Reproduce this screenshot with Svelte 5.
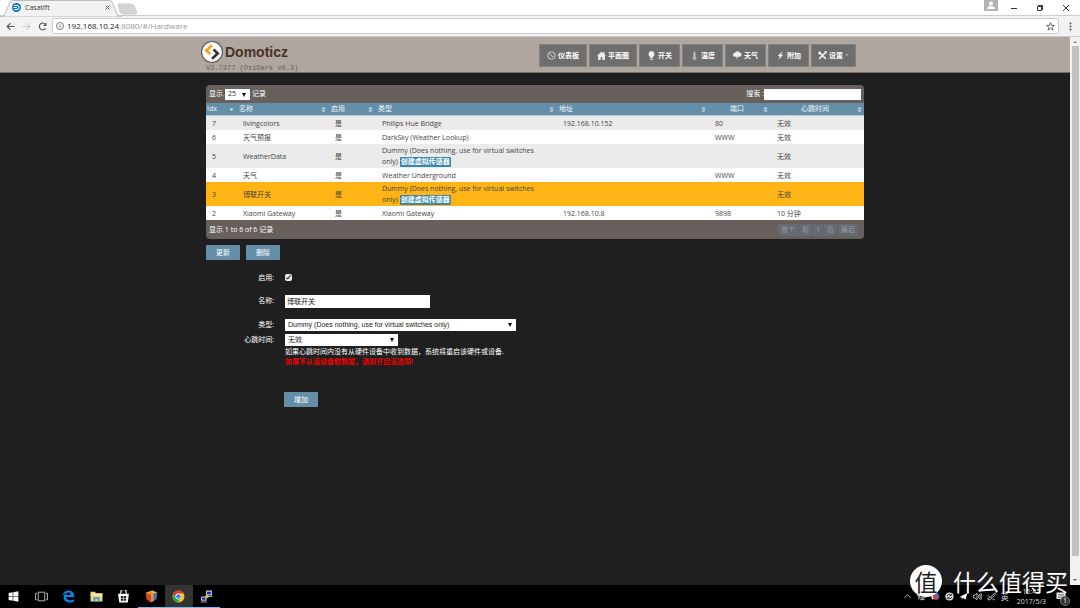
<script>
    const nav = [
        { icon: 'gauge', text: '仪表板', wide: true },
        { icon: 'home', text: '平面图', wide: true },
        { icon: 'bulb', text: '开关' },
        { icon: 'temp', text: '温度' },
        { icon: 'cloud', text: '天气' },
        { icon: 'bolt', text: '附加' },
        { icon: 'tools', text: '设置', caret: true }
    ];

    const columns = [
        { text: 'Idx', width: 30, sorted: true },
        { text: '名称', width: 92 },
        { text: '启用', width: 47 },
        { text: '类型', width: 181 },
        { text: '地址', width: 152 },
        { text: '端口', width: 62, center: true },
        { text: '心跳时间', width: 94, center: true }
    ];

    const dummy = 'Dummy (Does nothing, use for virtual switches only)';

    const devices = [
        { id: 7, name: 'livingcolors', type: 'Philips Hue Bridge', address: '192.168.10.152', port: '80', timeout: '无效' },
        { id: 6, name: '天气预报', type: 'DarkSky (Weather Lookup)', address: '', port: 'WWW', timeout: '无效' },
        { id: 5, name: 'WeatherData', type: dummy, virtual: true, address: '', port: '', timeout: '无效' },
        { id: 4, name: '天气', type: 'Weather Underground', address: '', port: 'WWW', timeout: '无效' },
        { id: 3, name: '博联开关', type: dummy, virtual: true, address: '', port: '', timeout: '无效' },
        { id: 2, name: 'Xiaomi Gateway', type: 'Xiaomi Gateway', address: '192.168.10.8', port: '9898', timeout: '10 分钟' }
    ];

    const pages = ['首个', '前', '1', '后', '最后'];
    const apps = ['windows', 'tasks', 'edge', 'folder', 'store', 'cube', 'chrome', 'putty'];
    const tray = ['up', 'network', 'guard', 'sync', 'plane', 'volume', 'pen'];

    let selected = $state(3);
    let enabled = $state(true);
    let name = $state('博联开关');
    let search = $state('');
</script>

{#snippet navIcon(icon)}
    <svg class="nav-icon" viewBox="0 0 16 16" aria-hidden="true">
        {#if icon === 'gauge'}
            <circle cx="8" cy="8" r="6.6" fill="none" stroke="#ddd" stroke-width="1.6" />
            <path d="M5 4.5 8.5 9.5M8.5 9.5h3" stroke="#ddd" stroke-width="1.6" fill="none" />
        {:else if icon === 'home'}
            <path d="M0 9 8 1l3 3V2h2.500v4.500L16 9h-2v7H9.500v-5h-3v5H2V9z" fill="#eee" />
        {:else if icon === 'bulb'}
            <path d="M8 0a5.500 5.500 0 0 0-3 10l1 2.500h4L11 10a5.500 5.500 0 0 0-3-10zM6 13.500h4V16H6z" fill="#eee" />
        {:else if icon === 'temp'}
            <path d="M6 1h4v9a3.500 3.500 0 1 1-4 0z" fill="#aaa" />
            <path d="M8 5v8" stroke="#ddd" stroke-width="1.500" />
        {:else if icon === 'cloud'}
            <path d="M3.500 10a3.500 3.500 0 0 1 0-7A5 5 0 0 1 12 2.500a4 4 0 0 1 1 7.500H9l-3 5 .5-5z" fill="#eee" />
        {:else if icon === 'bolt'}
            <path d="M12 0 3 9h4l-3 7 9-9.500H9z" fill="#eee" />
        {:else}
            <path d="M2 2l12 12M14 2 2 14" stroke="#eee" stroke-width="2.600" />
            <path d="M0 4a4 4 0 0 0 5 2L6 4 3 0zM11 1l4 4 1-3-2-2z" fill="#eee" />
        {/if}
    </svg>
{/snippet}

{#snippet appIcon(app)}
    <svg class="app-icon" viewBox="0 0 24 24" aria-hidden="true">
        {#if app === 'windows'}
            <path d="M3 5.500 10.500 4v7.500H3zM11.500 4 21 2.500v9h-9.500zM3 12.500h7.500V20L3 18.500zM11.500 12.500H21v9L11.500 20z" fill="#fff" />
        {:else if app === 'tasks'}
            <path d="M6 4h12v16H6zM4 6H1v12h3M20 6h3v12h-3" fill="none" stroke="#ccc" stroke-width="1.600" />
        {:else if app === 'edge'}
            <path d="M1 11C2 4 7 1 12 1c7 0 11 5 11 12H8c0 4 3 6 7 6 3 0 5-.7 7-2v4c-2 1.300-5 2-8 2-7 0-11-4-11-10 0-3 2-6 5-8-3 1-5 3-7 6zm7-2h8c0-3-1.500-4.500-4-4.500S8.500 6 8 9z" fill="#0a84e0" />
        {:else if app === 'folder'}
            <path d="M1 3h8l2 3h12v15H1z" fill="#f6d77c" />
            <path d="M1 7h22v3H1z" fill="#ffe9a6" />
            <path d="M6 21v-8h12v8h-4v-4h-4v4z" fill="#4aa8dc" />
        {:else if app === 'store'}
            <path d="M7 7V4a5 5 0 0 1 10 0v3" fill="none" stroke="#fff" stroke-width="2" />
            <path d="M2 7h20l-2 16H4z" fill="#fff" />
            <path d="M7 11h4.500v4H7zM12.500 11H17v4h-4.500zM7 16h4.500v4H7zM12.500 16H17v4h-4.500z" fill="#222" />
        {:else if app === 'cube'}
            <path d="M1 5 14 1l9 4-12 4z" fill="#e8bb4c" />
            <path d="M1 5l10 4v14L3 17z" fill="#d94b27" />
            <path d="M11 9l12-4-2 12-10 6z" fill="#2f7dbd" />
            <path d="M5 4l5-1.500L17 7l-6 2zM11 9l5-1.600V20l-5 3z" fill="#ef8c36" />
        {:else if app === 'chrome'}
            <circle cx="12" cy="12" r="11" fill="#fbc116" />
            <path d="M2.500 6.500A11 11 0 0 1 21.500 6.500H12a5.500 5.500 0 0 0-5 8z" fill="#e33b2e" />
            <path d="M2.500 6.500A11 11 0 0 0 11 23l5.500-8.500c-3 4-8 3-9.500 0z" fill="#2ba24c" />
            <circle cx="12" cy="12" r="5.500" fill="#fff" />
            <circle cx="12" cy="12" r="4.300" fill="#4285f4" />
        {:else}
            <path d="M11 1h11v9H11zM2 12h10v8H2z" fill="#c5c9d8" />
            <path d="M13 3h7v5h-7zM4 14h6v4H4z" fill="#1824b8" />
            <path d="M13 11h10v2H13zM1 21h12v2H1z" fill="#9a9da8" />
            <path d="M15 8 8 12l5 1-5 5 10-6-5-1z" fill="#f5e829" />
        {/if}
    </svg>
{/snippet}

{#snippet trayIcon(icon)}
    <svg class="tray-icon" viewBox="0 0 20 20" fill="none" stroke="#ddd" stroke-width="1.800" aria-hidden="true">
        {#if icon === 'up'}
            <path d="M3 13l7-7 7 7" />
        {:else if icon === 'network'}
            <path d="M6 4h12v9H6zM12 13v4M7 17h10M1 3v5h3v9" />
        {:else if icon === 'guard'}
            <path d="M10 1A9 9 0 0 0 4 17l6-7z" fill="#e7eefb" stroke="none" />
            <path d="M10 1a9 9 0 0 1 5 16l-5-7z" fill="#3277d8" stroke="none" />
            <path d="M3 8l8-3 4 12H7z" fill="#e23b2d" stroke="none" />
        {:else if icon === 'sync'}
            <circle cx="10" cy="10" r="9" fill="#ddd" stroke="none" />
            <path d="M5 9a5 5 0 0 1 9-2M15 11a5 5 0 0 1-9 2M14 4v4h-4M6 16v-4h4" stroke="#222" />
        {:else if icon === 'plane'}
            <path d="M1 11 19 2l-5 15-5-4-3 4v-5z" fill="#fff" stroke="none" />
        {:else if icon === 'volume'}
            <path d="M1 7h3l5-4v14l-5-4H1zM12 7q2 3 0 6M14 4q5 6 0 12M17 2q6 8 0 16" />
        {:else}
            <path d="M8 12 17 2l2 3-8 9zM11 13q-4 7-9 4 0-5 5-5M1 11q2-4 5-1M12 17h5" />
        {/if}
    </svg>
{/snippet}

<div class="desktop">
    <header class="browser">
        <div class="tab-strip">
            <div class="tab">
                <svg class="tab-shape" viewBox="0 0 138 17" aria-hidden="true">
                    <path d="M0 17 4 16 10 2Q11 .5 13 .5H109Q111 .5 112 2L118 16 122 17z" fill="#f2f2f2" stroke="#bbb" />
                    <path d="M118 4h13q2 0 3 2l3 7q0 1-2 1h-12q-2 0-3-2z" fill="#d4d4d4" stroke="#ccc" />
                </svg>
                <svg class="favicon" viewBox="0 0 18 18" aria-hidden="true">
                    <circle cx="9" cy="9" r="9" fill="#1679c8" />
                    <path d="M5 5h5a4 4 0 0 1 0 8H5M3 9h7" fill="none" stroke="#fff" stroke-width="2" />
                </svg>
                <span class="tab-title">Casatift</span>
                <button class="tab-close" aria-label="Close tab">
                    <svg viewBox="0 0 10 10"><path d="M1 1l8 8M9 1 1 9" stroke="#555" stroke-width="1.800" /></svg>
                </button>
            </div>
            <div class="window-buttons">
                <button class="profile" aria-label="Profile">
                    <svg viewBox="0 0 14 11"><circle cx="7" cy="3.500" r="2" fill="#fff" /><path d="M3 9q0-3 4-3t4 3z" fill="#fff" /></svg>
                </button>
                <button aria-label="Minimize"><svg viewBox="0 0 10 10"><path d="M2 5.500h6" stroke="#333" /></svg></button>
                <button aria-label="Restore">
                    <svg viewBox="0 0 10 10" fill="none" stroke="#333"><path d="M2.500 3.500h4v4h-4zM3.500 3V2.500h4v4H7" /></svg>
                </button>
                <button aria-label="Close"><svg viewBox="0 0 10 10"><path d="M2 2l6 6M8 2 2 8" stroke="#333" /></svg></button>
            </div>
        </div>
        <div class="toolbar">
            <button aria-label="Back">
                <svg viewBox="0 0 16 16" fill="none" stroke="#555" stroke-width="2"><path d="M15 8H2M8 2 2 8l6 6" /></svg>
            </button>
            <button aria-label="Forward">
                <svg viewBox="0 0 16 16" fill="none" stroke="#ccc" stroke-width="2"><path d="M1 8h13M8 2l6 6-6 6" /></svg>
            </button>
            <button aria-label="Reload">
                <svg viewBox="0 0 16 16" fill="none" stroke="#555" stroke-width="2"><path d="M13.500 11A6 6 0 1 1 13 4" /><path d="M15 1v6H9z" fill="#555" stroke="none" /></svg>
            </button>
            <div class="address">
                <svg class="info" viewBox="0 0 16 16" fill="none" stroke="#555" stroke-width="1.500">
                    <circle cx="8" cy="8" r="7" /><path d="M8 7v5M8 4v1.500" />
                </svg>
                <span class="url"><b>192.168.10.24</b>:8080/#/Hardware</span>
                <button aria-label="Bookmark">
                    <svg viewBox="0 0 16 16" fill="none" stroke="#444" stroke-width="1.400"><path d="M8 1l2 5h5l-4 3.500 1.500 5L8 11.500l-4.500 3 1.500-5L1 6h5z" /></svg>
                </button>
            </div>
            <button aria-label="Menu">
                <svg viewBox="0 0 16 16" fill="#555"><circle cx="8" cy="2.500" r="1.800" /><circle cx="8" cy="8" r="1.800" /><circle cx="8" cy="13.500" r="1.800" /></svg>
            </button>
        </div>
    </header>

    <div class="viewport">
        <div class="page">
            <div class="site-header">
                <div class="container header-row">
                    <div class="brand">
                        <div class="brand-row">
                            <svg class="logo" viewBox="0 0 42 42" aria-hidden="true">
                                <circle cx="21" cy="21" r="20" fill="#f2f2f2" stroke="#555" stroke-width="2" />
                                <circle cx="21" cy="21" r="17.500" fill="#fff" stroke="#ddd" />
                                <path d="M21 8 10 18l8 7" fill="none" stroke="#f6a01a" stroke-width="5" />
                                <path d="M24 16l8 8-11 10" fill="none" stroke="#333" stroke-width="5" />
                            </svg>
                            <span class="brand-name">Domoticz</span>
                        </div>
                        <span class="version">V3.7377 (OsiDark v0.3)</span>
                    </div>
                    <nav>
                        {#each nav as item}
                            <a href="#/{item.icon}" class:wide={item.wide} class:dropdown={item.caret}>
                                {@render navIcon(item.icon)}
                                <span>{item.text}</span>
                                {#if item.caret}<i class="caret"></i>{/if}
                            </a>
                        {/each}
                    </nav>
                </div>
            </div>

            <main class="container">
                <section class="grid">
                    <div class="grid-bar top">
                        <label class="length">
                            显示
                            <span class="select small">
                                <select><option>25</option></select>
                            </span>
                            记录
                        </label>
                        <label class="search">搜索 :<input type="text" bind:value={search} /></label>
                    </div>
                    <table>
                        <colgroup>
                            {#each columns as column}
                                <col style="width: {column.width / 6.58}%" />
                            {/each}
                        </colgroup>
                        <thead>
                            <tr>
                                {#each columns as column}
                                    <th>
                                        <div class="th" class:center={column.center}>
                                            <span>{column.text}</span>
                                            <svg class="sort" viewBox="0 0 10 14" aria-hidden="true">
                                                {#if column.sorted}
                                                    <path d="M1 5h8L5 10z" fill="#dfe9ef" />
                                                {:else}
                                                    <path d="M2 5.500 5 2l3 3.500zM2 8.500 5 12l3-3.500z" fill="none" stroke="#dfe9ef" stroke-width="1.400" />
                                                {/if}
                                            </svg>
                                        </div>
                                    </th>
                                {/each}
                            </tr>
                        </thead>
                        <tbody>
                            {#each devices as device}
                                <tr class:selected={device.id === selected} onclick={() => (selected = device.id)}>
                                    <td>{device.id}</td>
                                    <td>{device.name}</td>
                                    <td>是</td>
                                    <td>
                                        {device.type}
                                        {#if device.virtual}<button class="label">创建虚拟传感器</button>{/if}
                                    </td>
                                    <td>{device.address}</td>
                                    <td>{device.port}</td>
                                    <td>{device.timeout}</td>
                                </tr>
                            {/each}
                        </tbody>
                    </table>
                    <div class="grid-bar bottom">
                        <span>显示 1 to 6 of 6 记录</span>
                        <div class="pager">
                            {#each pages as page}
                                <button disabled>{page}</button>
                            {/each}
                        </div>
                    </div>
                </section>

                <div class="actions">
                    <button class="btn">更新</button>
                    <button class="btn">删除</button>
                </div>

                <form onsubmit={(e) => e.preventDefault()}>
                    <label for="enabled">启用:</label>
                    <div class="field">
                        <input id="enabled" type="checkbox" bind:checked={enabled} />
                    </div>

                    <label for="name">名称:</label>
                    <div class="field name">
                        <input id="name" type="text" bind:value={name} />
                    </div>

                    <label for="type">类型:</label>
                    <div class="field">
                        <span class="select type">
                            <select id="type"><option>{dummy}</option></select>
                        </span>
                    </div>

                    <label for="timeout">心跳时间:</label>
                    <div class="field">
                        <span class="select timeout">
                            <select id="timeout"><option>无效</option></select>
                        </span>
                    </div>

                    <div class="hint">
                        <p>如果心跳时间内没有从硬件设备中收到数据，系统将重启该硬件或设备.</p>
                        <p class="warning">如果不从该设备取数据，请别开启该选项!</p>
                        <button class="btn">增加</button>
                    </div>
                </form>
            </main>
        </div>
        <div class="scrollbar">
            <i class="arrow up"></i>
            <i class="thumb"></i>
            <i class="arrow down"></i>
        </div>
    </div>

    <footer class="taskbar">
        <div class="apps">
            {#each apps as app}
                <button
                    aria-label={app}
                    class:active={app === 'chrome'}
                    class:running={['cube', 'chrome', 'putty'].includes(app)}
                >
                    {@render appIcon(app)}
                </button>
            {/each}
        </div>
        <div class="tray">
            {#each tray as icon}
                {@render trayIcon(icon)}
            {/each}
            <span class="ime">英</span>
            <div class="clock">
                <span>15:45</span>
                <span>2017/5/3</span>
            </div>
            <button class="notes" aria-label="Notifications">
                <svg viewBox="0 0 20 20"><path d="M1 1h18v13h-6l-4 5v-5H1z" fill="#eee" /><path d="M4 5h12M4 8h12M4 11h8" stroke="#333" /></svg>
                <span class="badge">1</span>
            </button>
        </div>
    </footer>

    <div class="watermark">
        <span class="stamp">值</span>
        <span>什么值得买</span>
    </div>
</div>

<style>
    :global(body) {
        margin: 0;
        background: #1f1f1f;
    }

    .desktop {
        display: flex;
        flex-direction: column;
        font-family: 'Open Sans', 'Noto Sans CJK SC', sans-serif;
        font-size: 7px;
        height: 100vh;
        line-height: 10px;
        overflow: hidden;
        position: relative;
    }

    button,
    input,
    select {
        border: 0;
        box-sizing: border-box;
        font: inherit;
        margin: 0;
        padding: 0;
    }

    button {
        background: none;
        color: inherit;
    }

    svg {
        display: block;
    }

    /* browser chrome */
    .tab-strip {
        background: #fff;
        border-bottom: 1px solid #ccc;
        display: flex;
        height: 15px;
        justify-content: space-between;
    }

    .tab {
        align-items: center;
        color: #333;
        display: flex;
        gap: 4px;
        padding-left: 12px;
        position: relative;
        width: 98px;
    }

    .tab-shape {
        height: 17px;
        left: 0;
        position: absolute;
        top: 0;
        width: 138px;
    }

    .favicon {
        height: 9px;
        position: relative;
        width: 9px;
    }

    .tab-title {
        flex: 1;
        position: relative;
    }

    .tab-close {
        position: relative;
    }

    .tab-close svg {
        height: 5px;
        width: 5px;
    }

    .window-buttons {
        display: flex;
        gap: 16px;
        padding-right: 9px;
    }

    .window-buttons svg {
        height: 10px;
        width: 10px;
    }

    .window-buttons .profile {
        align-self: flex-start;
        background: #b3b3b3;
        margin-right: -5px;
    }

    .window-buttons .profile svg {
        height: 11px;
        width: 14px;
    }

    .toolbar {
        align-items: center;
        background: #f2f2f2;
        border-bottom: 1px solid #c9cdd0;
        display: flex;
        gap: 7px;
        height: 20px;
        padding: 0 5px 0 6px;
    }

    .toolbar svg {
        height: 9px;
        width: 9px;
    }

    .address {
        align-items: center;
        background: #fff;
        border: 1px solid #ccc;
        border-radius: 2px;
        color: #999;
        display: flex;
        flex: 1;
        font-size: 8px;
        gap: 3px;
        height: 14px;
        margin-left: -2px;
        padding: 0 3px;
    }

    .address .info {
        height: 8px;
        width: 8px;
    }

    .url {
        flex: 1;
    }

    .url b {
        color: #222;
        font-weight: 400;
    }

    /* page */
    .viewport {
        display: flex;
        flex: 1;
        min-height: 0;
    }

    .page {
        background: #1f1f1f;
        color: #fff;
        flex: 1;
        overflow: hidden;
    }

    .container {
        margin: 0 auto;
        max-width: 658px;
    }

    .site-header {
        background: #aea69f;
        border-bottom: 1px solid #777069;
    }

    .header-row {
        align-items: center;
        display: flex;
        height: 35px;
        justify-content: space-between;
    }

    .brand {
        color: #4a3221;
        margin-left: -5px;
        padding-top: 3px;
    }

    .brand-row {
        align-items: center;
        display: flex;
        gap: 2px;
        height: 23px;
    }

    .logo {
        height: 22px;
        width: 22px;
    }

    .brand-name {
        font-family: 'Liberation Sans Narrow', 'Liberation Sans', sans-serif;
        font-size: 14px;
        font-weight: 700;
        line-height: 22px;
    }

    .version {
        color: #665f59;
        display: block;
        font-family: 'Liberation Mono', monospace;
        line-height: 8px;
        padding-left: 5px;
    }

    nav {
        display: flex;
        gap: 2px;
        margin-right: 8px;
        padding-top: 2px;
    }

    nav a {
        align-items: center;
        background: #6e6e6e;
        border: 1px solid #85807c;
        box-sizing: border-box;
        color: #fff;
        display: flex;
        font-weight: 700;
        gap: 2px;
        height: 23px;
        justify-content: center;
        text-decoration: none;
        width: 41px;
    }

    nav a.wide {
        width: 48px;
    }

    nav a.dropdown {
        width: 45px;
    }

    .nav-icon {
        height: 9px;
        width: 9px;
    }

    .caret {
        border: 2px solid transparent;
        border-top-color: #aaa;
        height: 0;
        width: 0;
    }

    /* hardware grid */
    .grid {
        background: #67605c;
        border-radius: 4px;
        margin-top: 12px;
        overflow: hidden;
    }

    .grid-bar {
        align-items: center;
        display: flex;
        height: 18px;
        justify-content: space-between;
        padding: 0 3px;
    }

    .grid-bar.bottom {
        height: 19px;
    }

    .length,
    .search {
        align-items: center;
        display: flex;
        gap: 2px;
    }

    .search {
        gap: 0;
    }

    .search input {
        background: #fff;
        height: 11px;
        width: 97px;
    }

    .select {
        display: inline-block;
        position: relative;
    }

    .select::after {
        border: 2px solid transparent;
        border-bottom: 0;
        border-top: 4px solid #111;
        content: '';
        pointer-events: none;
        position: absolute;
        right: 4px;
        top: 4px;
    }

    select {
        appearance: none;
        background: #fff;
        border-radius: 0;
        color: #222;
        display: block;
        height: 12px;
        padding: 0 3px;
        width: 100%;
    }

    .select.small {
        width: 25px;
    }

    .select.small select {
        height: 11px;
    }

    table {
        border-collapse: collapse;
        table-layout: fixed;
        width: 100%;
    }

    th {
        background: #658fa9;
        border-bottom: 1px solid #b9cbd7;
        color: #f0f5f8;
        font-weight: 400;
        padding: 1px 2px 1px 3px;
        text-align: left;
    }

    th:first-child {
        padding-left: 1px;
    }

    .th {
        align-items: center;
        display: flex;
        justify-content: space-between;
    }

    .th.center span {
        flex: 1;
        text-align: center;
    }

    .sort {
        height: 7px;
        width: 5px;
    }

    td {
        color: #444;
        height: 12px;
        line-height: 11px;
        padding: 1px 7px;
    }

    td:first-child {
        padding-left: 6px;
    }

    tbody tr {
        background: #fff;
    }

    tbody tr:nth-child(odd) {
        background: #ebebeb;
    }

    tbody tr.selected {
        background: #ffb515;
    }

    .label {
        background: #3a87ad;
        border-radius: 1px;
        color: #fff;
        font-weight: 700;
        height: 10px;
        line-height: 10px;
        padding: 0 1px;
        vertical-align: bottom;
    }

    .pager {
        display: flex;
        gap: 1px;
        padding-right: 3px;
    }

    .pager button {
        background: #656b72;
        color: #9a9a9a;
        height: 12px;
        padding: 0 3px;
    }

    .actions {
        display: flex;
        gap: 6px;
        margin-top: 6px;
    }

    .btn {
        background: #658fa9;
        border-radius: 1px;
        color: #fff;
        height: 15px;
        width: 34px;
    }

    /* device form */
    form {
        align-items: center;
        column-gap: 11px;
        display: grid;
        grid-template-columns: 68px 1fr;
        margin-top: 10px;
    }

    form > label {
        text-align: right;
    }

    .field {
        align-items: center;
        display: flex;
        min-height: 15px;
    }

    .field.name {
        min-height: 32px;
    }

    .field input[type='text'] {
        background: #fff;
        color: #222;
        height: 13px;
        padding: 0 2px;
        width: 145px;
    }

    .field input[type='checkbox'] {
        accent-color: #eee;
        height: 7px;
        width: 7px;
    }

    .select.type {
        font-family: 'Liberation Sans', sans-serif;
        width: 231px;
    }

    .select.timeout {
        width: 113px;
    }

    .hint {
        grid-column: 2;
    }

    .hint p {
        margin: 0;
    }

    .hint .warning {
        color: #f00000;
        font-weight: 700;
    }

    .hint .btn {
        display: block;
        margin: 25px 0 0 -1px;
    }

    .scrollbar {
        align-items: center;
        background: #f1f1f1;
        display: flex;
        flex-direction: column;
        gap: 3px;
        padding: 4px 1px;
        width: 8px;
    }

    .thumb {
        background: #c1c1c1;
        flex: 1;
        margin-bottom: 20px;
        width: 7px;
    }

    .arrow {
        border: 2px solid transparent;
    }

    .arrow.up {
        border-bottom-color: #888;
        border-top: 0;
    }

    .arrow.down {
        border-bottom: 0;
        border-top-color: #555;
    }

    /* taskbar */
    .taskbar {
        background: #000;
        color: #ddd;
        display: flex;
        height: 23px;
        justify-content: space-between;
    }

    .apps {
        display: flex;
        width: 220px;
    }

    .apps button {
        align-items: center;
        border-bottom: 1px solid transparent;
        display: flex;
        flex: 1;
        justify-content: center;
    }

    .apps button.active {
        background: #333;
    }

    .apps button.running {
        border-bottom-color: #76b9ed;
    }

    .app-icon {
        height: 13px;
        width: 13px;
    }

    .tray {
        align-items: center;
        display: flex;
        gap: 5px;
        padding-right: 14px;
    }

    .tray-icon {
        height: 9px;
        width: 9px;
    }

    .ime {
        font-size: 8px;
    }

    .clock {
        display: flex;
        flex-direction: column;
        padding: 0 5px 0 3px;
        text-align: center;
    }

    .notes {
        position: relative;
    }

    .notes svg {
        height: 10px;
        width: 10px;
    }

    .badge {
        background: #333;
        border: 1px solid #777;
        border-radius: 50%;
        color: #fff;
        height: 8px;
        left: 4px;
        line-height: 8px;
        position: absolute;
        top: 4px;
        width: 8px;
    }

    .watermark {
        align-items: center;
        bottom: 11px;
        color: #fff;
        display: flex;
        font-family: 'Noto Sans CJK SC', sans-serif;
        font-size: 23px;
        gap: 11px;
        line-height: 32px;
        pointer-events: none;
        position: absolute;
        right: 12px;
    }

    .stamp {
        background: #fff;
        border-radius: 50%;
        color: #1f1f1f;
        height: 32px;
        text-align: center;
        width: 32px;
    }
</style>
